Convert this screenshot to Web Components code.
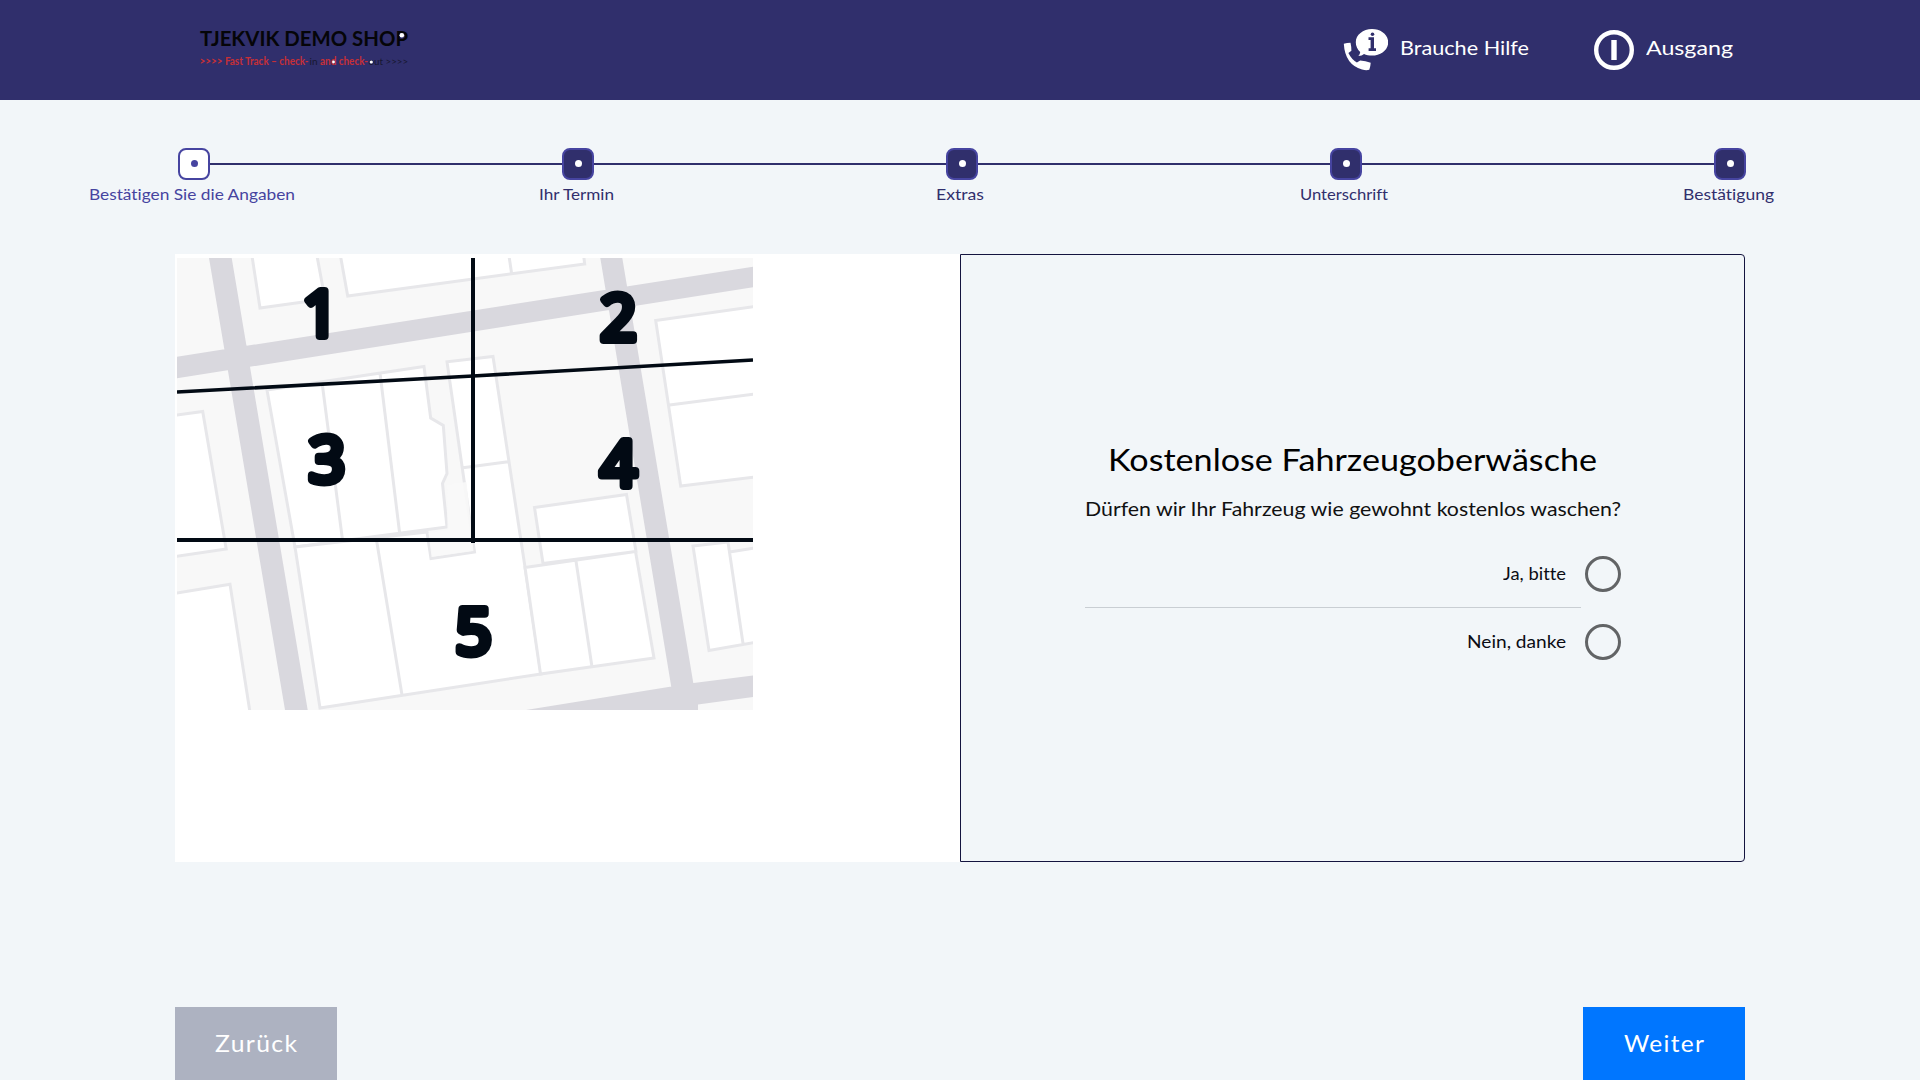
<!DOCTYPE html>
<html lang="de">
<head>
<meta charset="utf-8">
<title>Tjekvik Check-in</title>
<style>
html,body{margin:0;height:100%;overflow:hidden;background:#f2f6f9;font-family:Lato,"Open Sans",sans-serif;font-variant-ligatures:none}
</style>
</head>
<body>
<checkin-app></checkin-app>
<script>
const define = (name, html, setup) => customElements.define(name, class extends HTMLElement {
  connectedCallback() {
    if (this.shadowRoot) return;
    const t = document.createElement('template');
    t.innerHTML = html;
    this.attachShadow({ mode: 'open' }).append(t.content.cloneNode(true));
    if (setup) setup(this, this.shadowRoot);
  }
});

// A single line of text widened to fill the given width; "track" sets its letter spacing.
define('fit-text', `<style>:host{display:block;white-space:nowrap}span{display:inline-block;transform-origin:0 50%}</style><span><slot></slot></span>`, (el, root) => {
  const span = root.querySelector('span'), w = +el.getAttribute('width'), gap = +(el.getAttribute('track') || 0);
  span.style.letterSpacing = gap + 'px';
  const natural = span.getBoundingClientRect().width - gap;
  span.style.transform = 'scaleX(' + w / natural + ')';
  el.style.width = w + 'px';
});

define('shop-logo', `<style>:host{display:block;width:222px;height:64px}svg{display:block}</style>
<svg width="222" height="64" viewBox="198 14 222 64" font-family="Lato, sans-serif">
<text x="200" y="45.500" font-size="21.400" font-weight="700" textLength="208" lengthAdjust="spacingAndGlyphs" fill="#050508">TJEKVIK DEMO SHOP</text>
<circle cx="401.800" cy="35.300" r="2.300" fill="#fff"/>
<g font-size="10.400" font-weight="700" fill="#c72f36">
<text x="199.500" y="64.600" textLength="109" lengthAdjust="spacingAndGlyphs">&gt;&gt;&gt;&gt; Fast Track – check-</text>
<text x="309.500" y="64.600" textLength="8" lengthAdjust="spacingAndGlyphs" fill="#171730" font-weight="400">in</text>
<text x="320" y="64.600" textLength="48" lengthAdjust="spacingAndGlyphs">and check-</text>
<text x="368.600" y="64.600" textLength="39.500" lengthAdjust="spacingAndGlyphs" fill="#171730" font-weight="400">out &gt;&gt;&gt;&gt;</text></g>
<circle cx="333.500" cy="62" r="1.400" fill="#fff"/><circle cx="371.300" cy="62" r="1.600" fill="#fff"/>
</svg>`);

define('header-action', `<style>:host{display:flex;align-items:flex-start;color:#fff;font-size:20px;line-height:24px}::slotted(svg){display:block;flex:none}::slotted(fit-text){margin-top:7px}</style><slot></slot>`);

define('app-header', `<style>
:host{display:flex;justify-content:space-between;box-sizing:border-box;height:100px;padding:14px 187px 0 198px;background:#302f6c}
nav{display:flex;gap:65px;padding-top:14px}svg{margin-right:12px}
</style>
<shop-logo></shop-logo>
<nav>
<header-action><svg width="45" height="45" viewBox="1344 28 45 45" fill="#fff">
<path d="M1373 29c9 0 16.200 5.900 16.200 13.300s-7.200 13.300-16.200 13.300c-3 0-5.700-.6-8-1.700-1.300 1-3.300 2-5.700 2.100 1-1.100 1.800-2.600 1.900-4.100-2.800-2.400-4.400-5.700-4.400-9.600 0-7.400 7.200-13.300 16.200-13.300z"/>
<path d="M1344.800 43.700q3.200-1 6.700-1 .9 3.800.9 8l-3 2.200q3 6.200 8.500 9.600l3.300-2.100q5.300.4 10.500 2.300-.2 3.700-1.400 7-2.800 1-7.300-.2-17-5-18.200-25.800z"/>
<path fill="#302f6c" d="M1369.500 37.200h5.500v11h2v2.800h-7.400v-2.800h2v-8.200h-2.100z"/><circle cx="1373.500" cy="34.300" r="1.800" fill="#302f6c"/>
</svg><fit-text width="129">Brauche Hilfe</fit-text></header-action>
<header-action><svg width="40" height="44" viewBox="1594 28 40 44">
<circle cx="1614" cy="50" r="17.800" fill="none" stroke="#fff" stroke-width="4.400"/><path fill="#fff" d="M1611.300 40h5.400v20h-5.400z"/></svg><fit-text width="87">Ausgang</fit-text></header-action>
</nav>`);

define('progress-step', `<style>
:host{display:flex;flex-direction:column;align-items:center;flex:1;color:#312f6d;font-size:15px;line-height:18px}
.row{display:flex;align-items:center;width:100%}
.line{height:2px;flex:1;background:#302f6c;margin-top:-1px}
.box{box-sizing:border-box;width:32px;height:32px;border:2px solid #4644a0;border-radius:8px;background:#302f6c;display:flex;align-items:center;justify-content:center}
i{width:7px;height:7px;border-radius:50%;background:#fff;margin-top:-1px}
.row .l{flex:0 0 178px}
:host([first]) .l,:host([last]) .r{visibility:hidden}
:host([first]){color:#4644a0}:host([first]) .box{background:#fff}:host([first]) i{background:#4644a0}
.label{margin-top:5px}
</style><div class="row"><span class="line l"></span><span class="box"><i></i></span><span class="line r"></span></div><div class="label"><slot></slot></div>`);

define('progress-steps', `<style>:host{display:flex;height:154px;box-sizing:border-box;padding-top:48px}</style>
<progress-step first><fit-text width="206">Bestätigen Sie die Angaben</fit-text></progress-step>
<progress-step><fit-text width="75">Ihr Termin</fit-text></progress-step>
<progress-step><fit-text width="48">Extras</fit-text></progress-step>
<progress-step><fit-text width="88">Unterschrift</fit-text></progress-step>
<progress-step last><fit-text width="91">Bestätigung</fit-text></progress-step>`);

define('zone-map', `<style>:host{display:block}svg{display:block}</style>
<svg width="576" height="452" viewBox="177 258 576 452">
<path fill="#f8f8f8" d="M177 258h576v452h-576z"/>
<path fill="#d9d8de" d="M209 258h22.700l76 452h-22.700zM177 356.700l576-90v20.600l-576 91zM600.300 258h22l71 425-22 4zM526 710l145.500-23.500 22-3.500 59.500-7.500v21.500l-55 7.500v5.500z"/>
<g fill="#fff" stroke="#e7e7ea" stroke-width="3">
<path d="M252 256l8 52 65-9-8-43zM340.500 256l7.200 40 237-32-1-8M509 256l2.700 18M175 415.300l27.700-3.800 23.500 137.500-51.200 7.500zM175 593.300l55-9 20 128h-75z"/>
<path d="M267 390l157-23.500 6.700 51.500 12.600 7.500 3.700 48-4.500 10 4.500 43.500-152 20zM322 382l20.500 158M380 373l19.500 159"/>
<path d="M295 547l132-15 4 26.500 43.500-6.500-10.500-72-17-118.300 46-5.200 32 210.500 16 107-221 34zM376.500 540l25.500 155M463 467.700l45-6"/>
<path d="M525 567.500l110.500-16 18.500 106.500-113.500 16zM576 561l16 106M534.500 507.500l92-13 9.500 57-93 12z"/>
<path d="M655.700 320.500l99.300-14v170.500l-74.300 9zM669.500 405l85.500-11M693 546l35-4 1.500 10 25.500-4v94.500l-46 8zM728 542l15 101.500"/>
</g>
<path fill="#f8f8f8" d="M466.500 482l7 69-42 6-3-24 19-3-.5-45z" opacity=".9"/>
<g stroke="#020a14" stroke-width="4" fill="none"><path d="M473 258v285M177 540h576"/><path stroke-width="3.600" d="M177 392l296-16 280-16"/></g>
<g font-family="Open Sans" font-size="63" fill="#020a14" stroke="#020a14" stroke-width="8" stroke-linejoin="round" text-anchor="middle">
<text x="320.500" y="335.500">1</text><text x="618.500" y="340">2</text><text x="327" y="481.500">3</text><text x="618.500" y="485.500">4</text><text x="473.500" y="654">5</text></g>
</svg>`);

define('radio-option', `<style>:host{display:flex;justify-content:flex-end;align-items:center;gap:19px;height:36px;font-size:16.800px;color:#0b0c14;line-height:24px}
i{box-sizing:border-box;width:36px;height:36px;border:3px solid #626466;border-radius:50%}</style><slot></slot><i></i>`);

define('offer-card', `<style>
:host{display:flex;height:608px;margin:0 175px}
.map{box-sizing:border-box;width:785px;background:#fff;padding:4px 0 0 2px}
.q{box-sizing:border-box;width:785px;border:1px solid #14143f;border-radius:0 4px 4px 0;padding:184px 123px 0 124px}
.t{font-size:30px;line-height:40px;color:#000;margin-left:23px}.s{font-size:19.300px;line-height:28px;color:#111}
.s{margin-top:16px}
.a{margin-top:33px}hr{height:1px;border:0;background:#c9ced3;margin:15px 40px 16px 0}
</style><section class="map"><zone-map></zone-map></section>
<section class="q"><fit-text class="t" width="489">Kostenlose Fahrzeugoberwäsche</fit-text>
<fit-text class="s" width="536">Dürfen wir Ihr Fahrzeug wie gewohnt kostenlos waschen?</fit-text>
<radio-option class="a"><fit-text width="63">Ja, bitte</fit-text></radio-option><hr>
<radio-option><fit-text width="99">Nein, danke</fit-text></radio-option></section>`);

define('nav-button', `<style>:host{display:flex;justify-content:center;box-sizing:border-box;width:162px;height:80px;padding:20px 1px 0 0;font-size:23.800px;line-height:32px;color:#fff;background:#adb2c1}
:host([primary]){background:#0076ff;padding-right:0}</style><slot></slot>`);

define('checkin-app', `<style>:host{display:block;height:1080px;overflow:hidden}footer{display:flex;justify-content:space-between;margin:145px 175px 0}</style>
<app-header></app-header><progress-steps></progress-steps><offer-card></offer-card>
<footer><nav-button><fit-text width="82" track="1.300">Zurück</fit-text></nav-button><nav-button primary><fit-text width="80" track="1.300">Weiter</fit-text></nav-button></footer>`);
</script>
</body>
</html>
